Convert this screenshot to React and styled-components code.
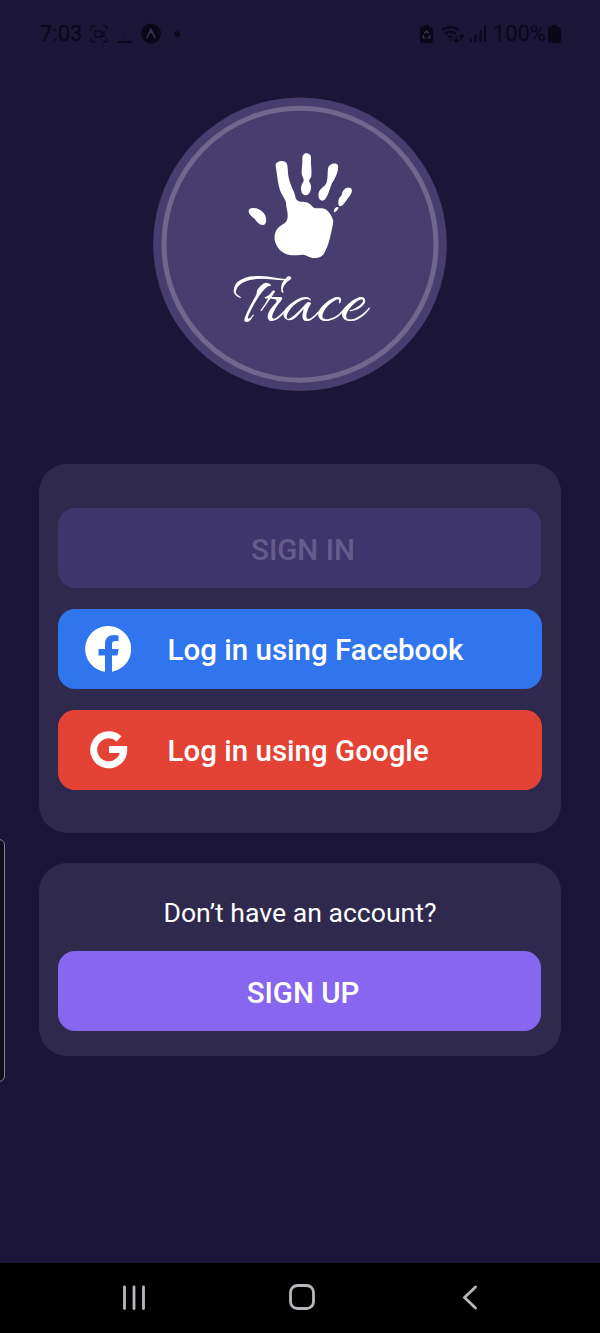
import React from "react";
import styled, { createGlobalStyle } from "styled-components";

const GlobalStyle = createGlobalStyle`
  * { box-sizing: border-box; }
  body { margin: 0; background: #1b1537; }
`;

const Screen = styled.div`
  width: 600px;
  height: 1333px;
  position: relative;
  display: flex;
  flex-direction: column;
  overflow: hidden;
  background: #1b1537;
  color: #fff;
  font-family: Roboto, "Liberation Sans", sans-serif;
`;

const StatusBar = styled.header`
  height: 67px;
  flex: none;
  display: flex;
  align-items: center;
  justify-content: space-between;
  padding: 0 39px 0 40px;
  color: #0a0818;
`;

const StatusGroup = styled.div`
  display: flex;
  align-items: center;
  gap: ${(p) => p.$gap}px;
`;

const StatusText = styled.span`
  font-size: 22px;
  line-height: 26px;
  font-weight: 400;
`;

const Icon = styled.svg`
  display: block;
  flex: none;
`;

const Content = styled.main`
  flex: 1;
  display: flex;
  flex-direction: column;
  align-items: center;
  padding-top: 30px;
`;

const Logo = styled.svg`
  display: block;
  flex: none;
  margin-bottom: 73px;
`;

const Wordmark = styled.text`
  font-family: Allura, "Great Vibes", "Liberation Serif", cursive;
  font-size: 76px;
  fill: #fff;
`;

const Card = styled.section`
  width: 522px;
  height: ${(p) => p.$height}px;
  flex: none;
  display: flex;
  flex-direction: column;
  align-items: flex-start;
  gap: ${(p) => p.$gap}px;
  padding: ${(p) => p.$top}px 0 0 19px;
  border-radius: 28px;
  background: #2f294d;

  & + & { margin-top: 30px; }
`;

const Button = styled.button`
  width: 483px;
  height: 80px;
  border: 0;
  border-radius: 17px;
  padding: 3px 0 0 7px;
  background: ${(p) => (p.$muted ? "#3f356d" : "#8766f0")};
  color: ${(p) => (p.$muted ? "#655c8b" : "#fff")};
  font: 500 29.5px/34px Roboto, "Liberation Sans", sans-serif;
`;

const SocialButton = styled.button`
  width: 484px;
  height: 80px;
  border: 0;
  border-radius: 17px;
  padding: 0;
  display: flex;
  align-items: center;
  background: ${(p) => p.$color};
  color: #fff;
  font: 500 29.5px/34px Roboto, "Liberation Sans", sans-serif;
`;

const SocialIcon = styled.span`
  width: 109.5px;
  flex: none;
  display: flex;
  padding-left: ${(p) => p.$left}px;
`;

const SocialLabel = styled.span`
  padding-top: 2px;
  white-space: nowrap;
`;

const Prompt = styled.p`
  width: 483px;
  margin: 0;
  padding-left: 1px;
  text-align: center;
  font-size: 26.6px;
  line-height: 32px;
`;

const NavBar = styled.nav`
  height: 70px;
  flex: none;
  display: flex;
  align-items: center;
  padding-left: 120px;
  background: #000;
`;

const NavItem = styled.span`
  width: ${(p) => p.$width}px;
  display: flex;
`;

const EdgeHandle = styled.div`
  position: absolute;
  left: -12px;
  top: 839px;
  width: 17px;
  height: 243px;
  border: 1px solid #85828f;
  border-radius: 6px;
  background: #100d20;
`;

function TraceLogo() {
  return (
    <Logo width="294" height="294" viewBox="0 0 294 294">
      <circle cx="147" cy="147.2" r="146.8" fill="#473d6f" />
      <circle cx="147" cy="147.2" r="136" fill="none" stroke="#70678f" strokeWidth="5" />
      <g transform="translate(72 43) scale(0.33333)" fill="#fff">
        <path d="M152 78C149 63 178 57 185 70C190 81 187 98 192 116C197 139 207 151 210 166C212 179 217 184 227 185C245 185 250 187 260 197C270 208 276 204 289 205C306 206 317 220 324 240C326 248 321 266 318 280C313 302 309 318 301 333C295 348 286 353 270 354C252 355 245 343 231 344C218 346 206 347 193 345C170 341 153 321 149 300C147 280 153 268 166 258C179 249 187 246 188 230C189 213 183 204 183 188C182 179 174 170 168 158C158 136 157 103 152 78Z" />
        <path d="M232 58C231 44 239 39 246 40C255 41 259 49 258 58C257 75 261 91 259 107C258 116 251 117 253 125C263 137 258 164 243 166C227 165 224 143 233 128C239 121 235 115 232 108C227 95 233 76 232 58Z" />
        <path d="M309 86C312 70 332 67 338 74C342 85 337 98 331 112C328 121 321 127 318 137C313 149 306 182 291 182C278 180 277 158 287 148C295 139 301 138 305 127C309 113 307 99 309 86Z" />
        <path d="M351 161C353 148 368 138 377 144C385 151 379 162 371 172C363 181 357 197 346 199C336 198 340 176 345 171C349 168 350 166 351 161Z" />
        <path d="M326 213C327 206 336 198 340 202C341 208 332 217 327 217Z" />
        <path d="M71 215C69 204 82 202 92 205C103 206 119 218 122 230C125 241 124 253 115 255C103 256 96 246 90 238C82 229 73 225 71 215Z" />
      </g>
      <Wordmark x="80" y="223">Trace</Wordmark>
    </Logo>
  );
}

function StatusIcons() {
  return (
    <StatusBar>
      <StatusGroup $gap={8}>
        <StatusText>7:03</StatusText>
        <Icon width="18" height="18" viewBox="0 0 18 18" fill="none" stroke="currentColor" strokeWidth="1.3">
          <path d="M1 5V3a2 2 0 0 1 2-2h2M13 1h2a2 2 0 0 1 2 2v2M17 13v2a2 2 0 0 1-2 2h-2M5 17H3a2 2 0 0 1-2-2v-2" />
          <rect x="4.5" y="6" width="7" height="6" rx="1" />
          <path d="M11.5 8l2.5-1.5v5L11.5 10" />
        </Icon>
        <Icon width="17" height="20" viewBox="0 0 17 20" fill="none" stroke="currentColor">
          <path d="M8.5 3v10M5.5 10l3 3 3-3" strokeWidth="1" opacity=".2" />
          <path d="M2 18h14" strokeWidth="1.8" />
        </Icon>
        <Icon width="20" height="21" viewBox="0 0 20 21">
          <circle cx="10" cy="10.5" r="10" fill="currentColor" />
          <path d="M6 14.6L9.8 6.3l4.2 8.3M8.2 10.4l1.6-2.2 1.7 2.2" fill="none" stroke="#383355" strokeWidth="1.5" strokeLinecap="round" />
        </Icon>
        <Icon width="13" height="6" viewBox="0 0 13 6">
          <circle cx="8.3" cy="3" r="2.8" fill="currentColor" />
        </Icon>
      </StatusGroup>
      <StatusGroup $gap={6}>
        <Icon width="15" height="18" viewBox="0 0 15 18">
          <path d="M4 0h5v2h2a2 2 0 0 1 2 2v12a2 2 0 0 1-2 2H2a2 2 0 0 1-2-2V4a2 2 0 0 1 2-2h2z" fill="currentColor" />
          <path d="M4.2 8.5L6.5 6l2.3 2.5M9.8 10v3H7.5M3.2 10v3h2.500" fill="none" stroke="#3a3558" strokeWidth="1.2" />
        </Icon>
        <Icon width="23" height="18" viewBox="0 0 23 18" fill="none" stroke="currentColor" strokeWidth="2">
          <path d="M1 5.3a12.5 12.5 0 0 1 17 0M4 9a8 8 0 0 1 11 0M7 12.5a4.2 4.2 0 0 1 5 0" />
          <path d="M9.500 16v-2M15.5 11v6M13 14.5l2.5 2.5 2.5-2.5M20.5 16v-6M18.5 12l2-2 2 2" strokeWidth="1.6" />
        </Icon>
        <Icon width="17" height="17" viewBox="0 0 17 17" fill="currentColor">
          <path d="M0 14h2v3H0zM4.500 10h2v7h-2zM9.500 5h2v12h-2zM14 1h2v16h-2z" />
        </Icon>
        <StatusGroup $gap={2}>
          <StatusText>100%</StatusText>
          <Icon width="13" height="18" viewBox="0 0 13 18">
            <path d="M4 0h5v2h2a2 2 0 0 1 2 2v12a2 2 0 0 1-2 2H2a2 2 0 0 1-2-2V4a2 2 0 0 1 2-2h2z" fill="currentColor" />
          </Icon>
        </StatusGroup>
      </StatusGroup>
    </StatusBar>
  );
}

export default function App() {
  return (
    <Screen>
      <GlobalStyle />
      <StatusIcons />
      <Content>
        <TraceLogo />
        <Card $height={369} $gap={21} $top={44}>
          <Button $muted>SIGN IN</Button>
          <SocialButton $color="#3175ee">
            <SocialIcon $left={27}>
              <Icon width="46" height="46" viewBox="0 0 46 46">
                <path d="M20 45.8A23 23 0 1 1 27 45.7V29.5h5.5l1.2-6.500H27v-4.500c0-2.500 1-3.500 3.500-3.500h3V9.500c-8-1.800-13.500.8-13.500 8.500v5h-6.500v6.500H20z" fill="#fff" />
              </Icon>
            </SocialIcon>
            <SocialLabel>Log in using Facebook</SocialLabel>
          </SocialButton>
          <SocialButton $color="#e34235">
            <SocialIcon $left={32}>
              <Icon width="38" height="38" viewBox="0 0 38 38">
                <path d="M29 7.900A15 15 0 1 0 33.700 18.500H19" fill="none" stroke="#fff" strokeWidth="7" />
              </Icon>
            </SocialIcon>
            <SocialLabel>Log in using Google</SocialLabel>
          </SocialButton>
        </Card>
        <Card $height={193} $gap={22} $top={34}>
          <Prompt>Don’t have an account?</Prompt>
          <Button>SIGN UP</Button>
        </Card>
      </Content>
      <NavBar>
        <NavItem $width={168}>
          <Icon width="28" height="26" viewBox="0 0 28 26" fill="none" stroke="#b9b6bd" strokeWidth="2.8" strokeLinecap="round">
            <path d="M4.5 2v21.500M14 2v21.500M23.500 2v21.500" />
          </Icon>
        </NavItem>
        <NavItem $width={172}>
          <Icon width="28" height="28" viewBox="0 0 28 28" fill="none" stroke="#b9b6bd" strokeWidth="2.8">
            <rect x="2.5" y="1.5" width="23" height="23" rx="7" />
          </Icon>
        </NavItem>
        <NavItem $width={18}>
          <Icon width="18" height="26" viewBox="0 0 18 26" fill="none" stroke="#b9b6bd" strokeWidth="2.8" strokeLinecap="round">
            <path d="M15.500 2L4.500 12.500l11 10.500" />
          </Icon>
        </NavItem>
      </NavBar>
      <EdgeHandle />
    </Screen>
  );
}
